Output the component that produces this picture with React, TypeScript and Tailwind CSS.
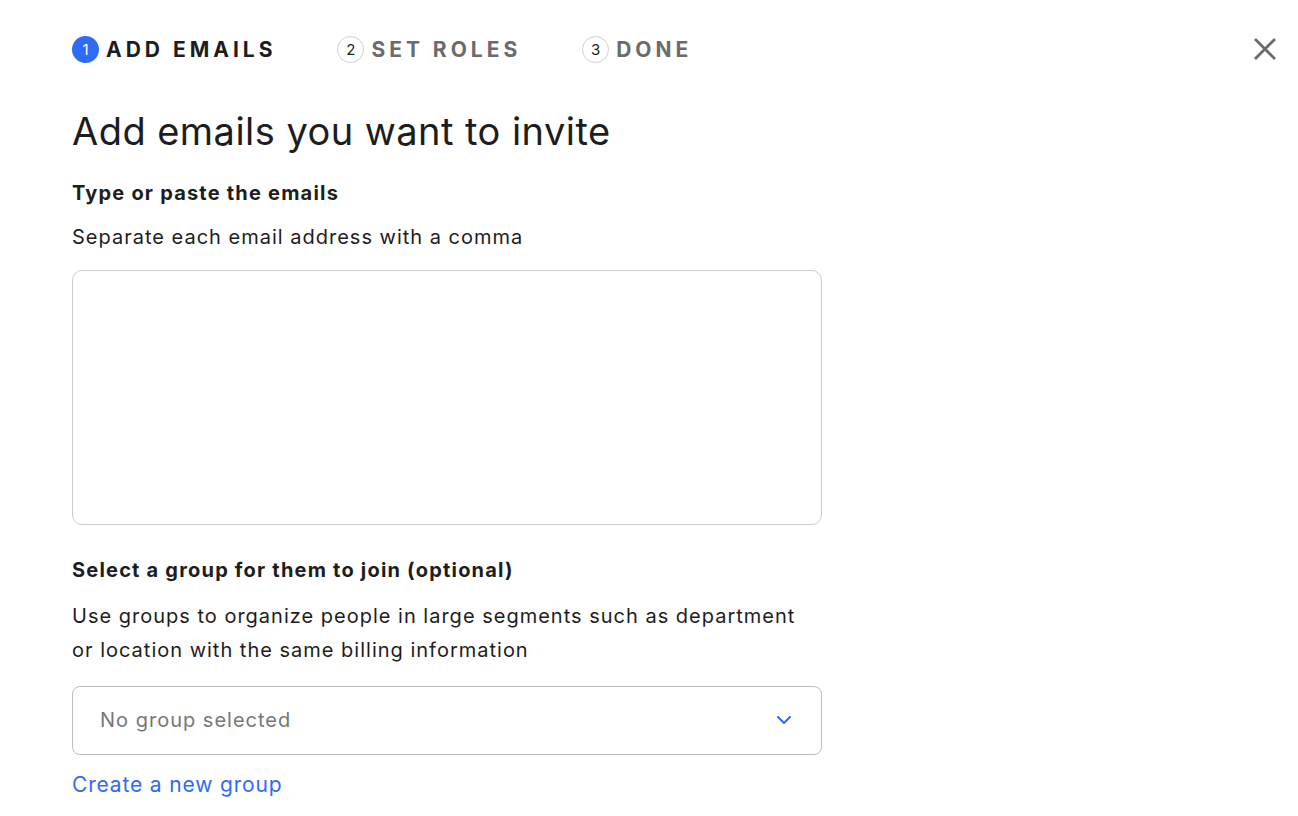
import React from "react";

const steps = [
  { n: 1, label: "ADD EMAILS", active: true },
  { n: 2, label: "SET ROLES", active: false },
  { n: 3, label: "DONE", active: false },
];

function StepBar() {
  return (
    <div className="flex items-center gap-[61px]">
      {steps.map((s) => (
        <div key={s.n} className="flex items-center gap-[7px]">
          <span
            className={
              s.active
                ? "flex h-[27px] w-[27px] items-center justify-center rounded-full bg-[#2f6bf5] text-[15px] text-white"
                : "flex h-[27px] w-[27px] items-center justify-center rounded-full border border-[#cfcfcf] text-[15px] text-[#222]"
            }
          >
            {s.n}
          </span>
          <span
            className={
              s.active
                ? "text-[21px] font-bold tracking-[0.19em] text-[#1d1d1d]"
                : "text-[21px] font-bold tracking-[0.19em] text-[#6b6b6b]"
            }
          >
            {s.label}
          </span>
        </div>
      ))}
    </div>
  );
}

export default function App() {
  return (
    <div
      className="relative min-h-[816px] w-full bg-white text-[#1d1d1d]"
      style={{ fontFamily: "Inter, 'Open Sans', sans-serif" }}
    >
      <button className="absolute right-[22px] top-[38px] text-[#6b6b6b]" aria-label="Close">
        <svg width="22" height="22" viewBox="0 0 22 22" fill="none" stroke="currentColor" strokeWidth="2.8">
          <path d="M1 1L21 21M21 1L1 21" />
        </svg>
      </button>

      <div className="w-[750px] pl-[72px] pt-[34px] box-content">
        <StepBar />

        <h1 className="mt-[42px] text-[38px] leading-[46px] font-normal tracking-[0.012em]">Add emails you want to invite</h1>

        <div className="mt-[24px] text-[20px] font-bold leading-[30px] tracking-[0.06em]">Type or paste the emails</div>
        <div className="mt-[14px] text-[20px] leading-[30px] tracking-[0.05em]">Separate each email address with a comma</div>

        <textarea className="mt-[18px] block h-[255px] w-[750px] resize-none rounded-[10px] border border-[#cccccc] outline-none" />

        <div className="mt-[30px] text-[20px] font-bold leading-[30px] tracking-[0.06em]">Select a group for them to join (optional)</div>
        <div className="mt-[14px] text-[20px] leading-[34px] tracking-[0.05em]">
          Use groups to organize people in large segments such as department or location with the same billing information
        </div>

        <div className="mt-[19px] flex h-[69px] w-[750px] items-center justify-between rounded-[8px] border border-[#bdbdbd] pl-[27px] pr-[29px]">
          <span className="text-[20px] tracking-[0.05em] text-[#777]">No group selected</span>
          <svg width="16" height="10" viewBox="0 0 16 10" fill="none" stroke="#2f6bf5" strokeWidth="2" strokeLinecap="round" strokeLinejoin="round">
            <path d="M2 2L8 8L14 2" />
          </svg>
        </div>

        <a href="#" className="mt-[15px] inline-block text-[21px] leading-[30px] tracking-[0.04em] text-[#2f6bf5]">Create a new group</a>
      </div>
    </div>
  );
}
